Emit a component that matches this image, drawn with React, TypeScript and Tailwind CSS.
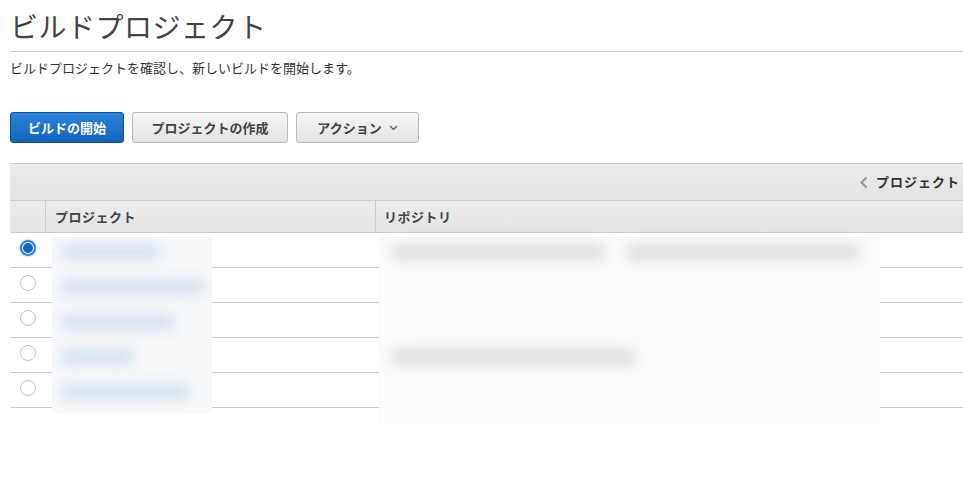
import React, { useState } from 'react';

const font = { fontFamily: '"Noto Sans CJK JP", "Liberation Sans", sans-serif' };

const rows = [
  { proj: 100, repo: [215, 235] },
  { proj: 145, repo: [] },
  { proj: 115, repo: [] },
  { proj: 75, repo: [245] },
  { proj: 130, repo: [] },
];

const App: React.FC = () => {
  const [selected, setSelected] = useState(0);

  return (
    <div className="w-[963px] h-[480px] bg-white text-[#333] overflow-hidden" style={font}>
      {/* Header */}
      <div className="pl-[10px]">
        <h1 className="text-[28px] leading-[38px] pt-[7px] pb-[6px] text-[#444] font-normal tracking-[0.5px]">
          ビルドプロジェクト
        </h1>
        <div className="border-t border-[#ccc]" />
        <p className="text-[13px] leading-[20px] mt-[6px] text-[#333]">
          ビルドプロジェクトを確認し、新しいビルドを開始します。
        </p>
      </div>

      {/* Buttons */}
      <div className="flex gap-2 pl-[10px] mt-[34px]">
        <button className="h-[31px] w-[114px] rounded-[3px] border border-[#0d4e97] bg-gradient-to-b from-[#2a82da] to-[#1166bb] text-white text-[13px] font-bold">
          ビルドの開始
        </button>
        <button className="h-[31px] w-[156px] rounded-[3px] border border-[#bbb] bg-gradient-to-b from-[#f6f6f6] to-[#e3e3e3] text-[#444] text-[13px] font-bold">
          プロジェクトの作成
        </button>
        <button className="h-[31px] w-[123px] rounded-[3px] border border-[#bbb] bg-gradient-to-b from-[#f6f6f6] to-[#e3e3e3] text-[#444] text-[13px] font-bold flex items-center justify-center gap-[7px]">
          <span>アクション</span>
          <svg width="9" height="6" viewBox="0 0 9 6" className="mt-[1px]">
            <path d="M1 1 L4.5 4.5 L8 1" fill="none" stroke="#555" strokeWidth="1.2" />
          </svg>
        </button>
      </div>

      {/* Table */}
      <div className="ml-[10px] mt-[20px] relative">
        <div className="h-[38px] border-t border-b border-[#ccc] bg-gradient-to-b from-[#ececec] to-[#e2e2e2] flex items-center justify-end pr-[3px]">
          <svg width="10" height="13" viewBox="0 0 10 13" className="mr-[7px]">
            <path d="M7.5 1.5 L2.5 6.5 L7.5 11.5" fill="none" stroke="#999" strokeWidth="2.2" />
          </svg>
          <span className="text-[13px] font-bold text-[#333] tracking-[1px]">プロジェクト</span>
        </div>
        <div className="h-[32px] border-b border-[#ccc] bg-gradient-to-b from-[#ececec] to-[#e4e4e4] flex text-[13px] font-bold text-[#444] tracking-[0.5px]">
          <div className="w-[36px] border-r border-[#ccc]" />
          <div className="w-[330px] border-r border-[#ccc] flex items-center pl-[9px]">プロジェクト</div>
          <div className="flex-1 flex items-center pl-[8px]">リポジトリ</div>
        </div>
        {rows.map((r, i) => (
          <div key={i} className="h-[35px] border-b border-[#ccc] flex items-center">
            <div className="w-[36px] flex justify-center mb-[5px]">
              <button
                onClick={() => setSelected(i)}
                className={`w-[16px] h-[16px] rounded-full flex items-center justify-center ${
                  selected === i
                    ? 'border-2 border-[#2a7fd6] shadow-[0_0_3px_#7bb5ee]'
                    : 'border border-[#c4c4c4] bg-white'
                }`}
              >
                {selected === i && <span className="w-[10px] h-[10px] rounded-full bg-[#1166bb]" />}
              </button>
            </div>
          </div>
        ))}

        {/* redacted overlays */}
        <div className="absolute left-[42px] top-[74px] w-[160px] h-[176px] bg-[#f6f8fa] flex flex-col pl-[8px]">
          {rows.map((r, i) => (
            <div key={i} className="h-[35px] flex items-center pb-[6px]">
              <div className="h-[16px] rounded-full bg-[#d6e3f0] blur-[6px]" style={{ width: r.proj }} />
            </div>
          ))}
        </div>
        <div className="absolute left-[369px] top-[74px] w-[501px] h-[188px] bg-[#fbfbfb] flex flex-col pl-[12px]">
          {rows.map((r, i) => (
            <div key={i} className="h-[35px] flex items-center gap-[20px] pb-[6px]">
              {r.repo.map((w, j) => (
                <div key={j} className="h-[18px] rounded-full bg-[#e0e0e0] blur-[6px]" style={{ width: w }} />
              ))}
            </div>
          ))}
        </div>
      </div>
    </div>
  );
};

export default App;
